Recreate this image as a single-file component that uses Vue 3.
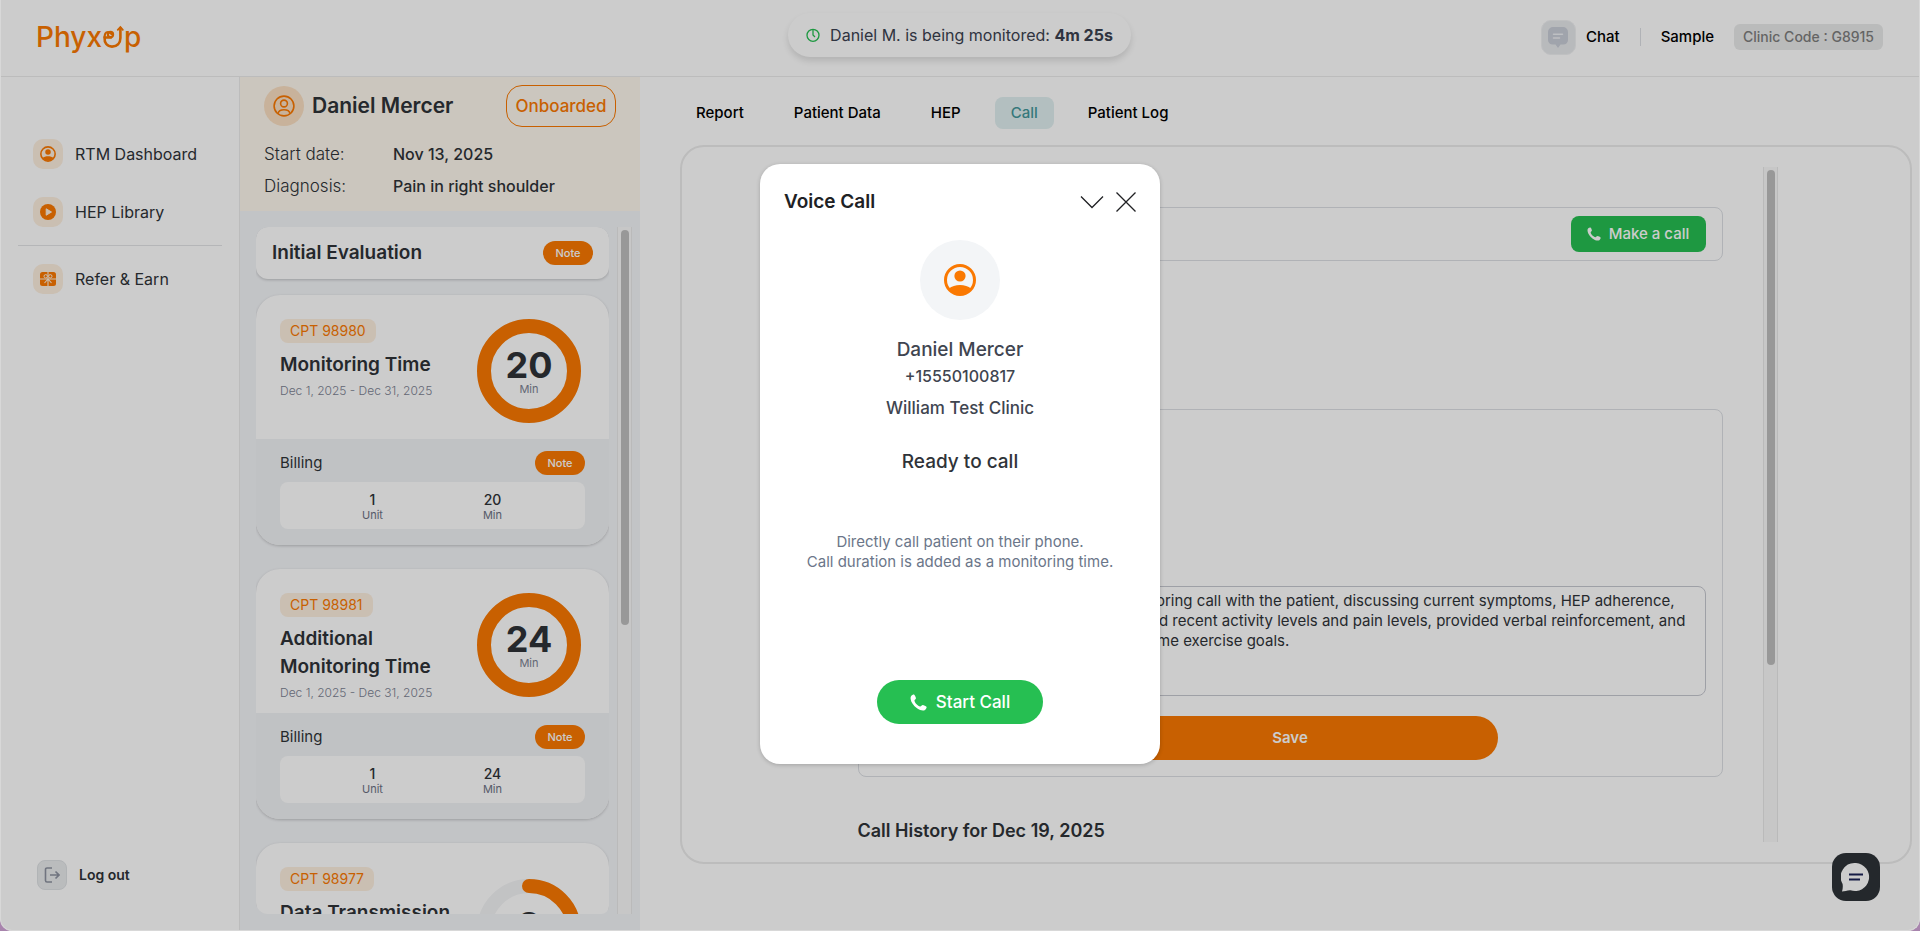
<template>
  <div class="app">
    <header class="topbar">
      <a href="#" class="logo" aria-label="PhyxUp">
        <span>Phyx</span>
        <svg class="logo-mark" viewBox="0 0 22 24" fill="none" stroke="currentColor" stroke-width="2.6" stroke-linecap="round">
          <path d="M9 12.5H2.6C2.2 17.8 5 21.6 10 21.6c5 0 8.4-3.400 8.400-8.600V3" />
          <path d="M2.600 12.500C2.600 9.500 3.500 7 6 7c1.500 0 2.500 1 3.500 2" stroke-width="2.200" />
          <circle cx="8.500" cy="9.500" r="2.600" stroke-width="2.200" />
          <path d="M15.800 4.800l2.600-2.800 2.400 2.800" stroke-width="1.800" />
        </svg>
        <span>p</span>
      </a>

      <div class="monitor">
        <svg width="14" height="14" viewBox="0 0 14 14" fill="none" stroke="#26bf52" stroke-width="1.3">
          <circle cx="7" cy="7.300" r="6" />
          <path d="M7 1.500v5.500l2 2" />
        </svg>
        <span>Daniel M. is being monitored: <b>4m 25s</b></span>
      </div>

      <div class="top-right">
        <a href="#" class="chat-link">
          <span class="chat-icon">
            <svg width="20" height="22" viewBox="0 0 20 22">
              <path d="M5 1h10a5 5 0 0 1 5 5v8a4.500 4.500 0 0 1-4.500 4.500h-3L10 22l-2.500-3.500h-3A4.500 4.500 0 0 1 0 14V6a5 5 0 0 1 5-5z" fill="#c9cdd7" />
              <path d="M5.500 8.300h9M5.500 12h6" stroke="#eef0f4" stroke-width="1.500" stroke-linecap="round" />
            </svg>
          </span>
          Chat
        </a>
        <span class="divider"></span>
        <a href="#" class="account">Sample</a>
        <span class="clinic-code">Clinic Code : G8915</span>
      </div>
    </header>

    <div class="body">
      <nav class="sidebar">
        <a href="#" class="nav-item">
          <span class="nav-icon">
            <svg width="16" height="16" viewBox="0 0 32 32"><circle cx="16" cy="16" r="14.300" fill="none" stroke="#fa7902" stroke-width="3.200" /><circle cx="16" cy="12" r="5.500" fill="#fa7902" /><path d="M5 24c5-4.500 17-4.500 22 0-4 7.500-18 7.500-22 0z" fill="#fa7902" /></svg>
          </span>
          RTM Dashboard
        </a>
        <a href="#" class="nav-item">
          <span class="nav-icon">
            <svg width="16" height="16" viewBox="0 0 16 16"><circle cx="8" cy="8" r="8" fill="#fa7902" /><path d="M6.200 4.800v6.400L11.500 8z" fill="#fdefdf" stroke="#fdefdf" stroke-linejoin="round" /></svg>
          </span>
          HEP Library
        </a>
        <hr />
        <a href="#" class="nav-item">
          <span class="nav-icon">
            <svg width="16" height="14" viewBox="0 0 16 14">
              <rect width="16" height="14" rx="2.500" fill="#fa7902" />
              <path d="M8 0v14M0 7h16M8 7L4.500 11M8 7l3.500 4" stroke="#fdefdf" stroke-width="1.100" />
              <circle cx="5.700" cy="4.300" r="1.700" fill="none" stroke="#fdefdf" />
              <circle cx="10.300" cy="4.300" r="1.700" fill="none" stroke="#fdefdf" />
            </svg>
          </span>
          Refer &amp; Earn
        </a>
        <button type="button" class="logout">
          <span class="logout-icon">
            <svg width="16" height="16" viewBox="0 0 16 16" fill="none" stroke="#8c929f" stroke-width="1.600"><path d="M8 1H3a1.500 1.500 0 0 0-1.500 1.500v11A1.500 1.500 0 0 0 3 15h5M6 8h9M11.500 4.500L15 8l-3.500 3.500" /></svg>
          </span>
          Log out
        </button>
      </nav>

      <aside class="patient">
        <div class="patient-head">
          <div class="patient-title">
            <span class="patient-avatar">
              <svg width="22" height="22" viewBox="0 0 22 22" fill="none" stroke="#fa7902" stroke-width="1.600"><circle cx="11" cy="11" r="9.900" /><circle cx="11" cy="8.500" r="3.400" /><path d="M5 18.500c1-5 11-5 12 0" /></svg>
            </span>
            <h1>Daniel Mercer</h1>
            <button type="button" class="status">Onboarded</button>
          </div>
          <dl>
            <dt>Start date:</dt>
            <dd>Nov 13, 2025</dd>
            <dt>Diagnosis:</dt>
            <dd>Pain in right shoulder</dd>
          </dl>
        </div>

        <div class="list-wrap">
          <div class="list">
            <section class="evaluation">
              <h2>Initial Evaluation</h2>
              <button type="button" class="note">Note</button>
            </section>

            <section v-for="card in cards" :key="card.code" class="card">
              <div class="card-top">
                <div class="card-text">
                  <span class="tag">CPT {{ card.code }}</span>
                  <h2><span v-for="line in card.title" :key="line">{{ line }}</span></h2>
                  <p>Dec 1, 2025 - Dec 31, 2025</p>
                  <p v-if="card.detail">{{ card.detail }}</p>
                </div>
                <div class="ring">
                  <svg width="104" height="104" viewBox="0 0 104 104" fill="none" stroke-width="14">
                    <circle cx="52" cy="52" r="45" stroke="#f3f4f6" />
                    <circle
                      cx="52" cy="52" r="45" stroke="#fa7902" pathLength="100" stroke-linecap="round"
                      :stroke-dasharray="`${card.progress} 100`" transform="rotate(-90 52 52)"
                    />
                  </svg>
                  <div class="ring-label">
                    <strong>{{ card.value }}</strong>
                    <span>{{ card.unit }}</span>
                  </div>
                </div>
              </div>
              <div class="billing">
                <div class="billing-head">
                  <span>Billing</span>
                  <button type="button" class="note">Note</button>
                </div>
                <div class="billing-box">
                  <div><b>1</b><span>Unit</span></div>
                  <div><b>{{ card.value }}</b><span>{{ card.unit }}</span></div>
                </div>
              </div>
            </section>
          </div>
          <div class="track"><div class="thumb list-thumb"></div></div>
        </div>
      </aside>

      <main class="main">
        <nav class="tabs">
          <a v-for="tab in tabs" :key="tab" href="#" :class="{ active: tab === activeTab }" @click.prevent="activeTab = tab">{{ tab }}</a>
        </nav>

        <div class="panel">
          <div class="panel-scroll">
            <div class="panel-content">
              <div class="call-row">
                <button type="button" class="make-call" @click="modalOpen = true">
                  <svg width="14" height="14" viewBox="0 0 16 16" fill="currentColor"><path :d="phonePath" /></svg>
                  Make a call
                </button>
              </div>

              <form class="note-form" @submit.prevent>
                <textarea v-model="note" aria-label="Call note"></textarea>
                <button type="submit" class="save">Save</button>
              </form>

              <h2 class="history">Call History for Dec 19, 2025</h2>
            </div>
            <div class="track"><div class="thumb panel-thumb"></div></div>
          </div>
        </div>
      </main>
    </div>

    <button type="button" class="support" aria-label="Open support chat">
      <svg width="30" height="30" viewBox="0 0 30 30">
        <path d="M15 1a14 14 0 1 1-5.500 27.200C6.500 28 3.500 29.500 1 29.500c.8-3 1-5 .6-7.500A14 14 0 0 1 15 1z" fill="#fff" />
        <path d="M8 12.500h14M8 17.500h11" stroke="#1b2257" stroke-width="2.200" />
      </svg>
    </button>

    <div v-if="modalOpen" class="backdrop">
      <div class="modal" role="dialog" aria-labelledby="call-title">
        <div class="modal-head">
          <h2 id="call-title">Voice Call</h2>
          <button type="button" aria-label="Minimize">
            <svg width="24" height="24" viewBox="0 0 24 24" fill="none" stroke="#202124" stroke-width="1.300"><path d="M1 6.500l11 11 11-11" /></svg>
          </button>
          <button type="button" aria-label="Close" @click="modalOpen = false">
            <svg width="20" height="20" viewBox="0 0 20 20" fill="none" stroke="#202124" stroke-width="1.300"><path d="M.5.5l19 19M19.500.5l-19 19" /></svg>
          </button>
        </div>
        <div class="modal-avatar">
          <svg width="32" height="32" viewBox="0 0 32 32"><circle cx="16" cy="16" r="14.500" fill="none" stroke="#fa7902" stroke-width="3" /><circle cx="16" cy="12" r="5.600" fill="#fa7902" /><path d="M5 24.500c5-4.800 17-4.800 22 0-4 7.500-18 7.500-22 0z" fill="#fa7902" /></svg>
        </div>
        <p class="callee">Daniel Mercer</p>
        <p class="phone">+15550100817</p>
        <p class="clinic">William Test Clinic</p>
        <p class="ready">Ready to call</p>
        <p class="hint">Directly call patient on their phone.<br />Call duration is added as a monitoring time.</p>
        <button type="button" class="start">
          <svg width="17" height="17" viewBox="0 0 16 16" fill="currentColor"><path :d="phonePath" /></svg>
          Start Call
        </button>
      </div>
    </div>
  </div>
</template>

<script setup>
import { ref } from "vue";

const tabs = ["Report", "Patient Data", "HEP", "Call", "Patient Log"];
const activeTab = ref("Call");
const modalOpen = ref(true);

const cards = [
  { code: "98980", title: ["Monitoring Time"], value: 20, unit: "Min", progress: 100 },
  { code: "98981", title: ["Additional", "Monitoring Time"], value: 24, unit: "Min", progress: 100 },
  { code: "98977", title: ["Data Transmission", "Musculoskeletal"], detail: "16 days required", value: 8, unit: "Days", progress: 50 },
];

const note = ref(
  "Conducted an interactive phone monitoring call with the patient, discussing current symptoms, HEP adherence, and general functional status. Reviewed recent activity levels and pain levels, provided verbal reinforcement, and encouraged the patient to meet the home exercise goals."
);

const phonePath =
  "M1.200 1.800C2 .8 3.300.2 4 .6c.7.5 1.600 2.500 1.600 3.400 0 1-1.500 1.500-1.400 2.300.3 2 3.300 5 5.300 5.400.9.200 1.500-1.400 2.500-1.400 1 0 3 1 3.500 1.800.5.9-.4 2.200-1.400 2.900-1.500 1-4.500.6-7.500-1.600C3.300 11 .9 7.500.6 4.600.5 3.500.6 2.500 1.200 1.800z";
</script>

<style>
html {
  background: #a884ad;
}
</style>

<style scoped>
.app {
  position: relative;
  display: flex;
  flex-direction: column;
  height: 100vh;
  box-sizing: border-box;
  border: 1px solid #d8d8d8;
  border-top: 0;
  border-radius: 0 0 12px 12px;
  overflow: hidden;
  background: #fff;
  color: #2f3338;
  font-family: Inter, "Open Sans", sans-serif;
  font-size: 14px;
  line-height: 20px;
}
.app *,
.app *::before {
  box-sizing: border-box;
}
h1,
h2,
p,
dl,
dd {
  margin: 0;
}
a {
  color: inherit;
  text-decoration: none;
}
button {
  padding: 0;
  border: 0;
  background: none;
  color: inherit;
  font: inherit;
  cursor: pointer;
}
h2 {
  font-size: 19px;
  font-weight: 600;
  line-height: 28px;
}

/* top bar */
.topbar {
  display: grid;
  grid-template-columns: 1fr auto 1fr;
  align-items: center;
  flex: none;
  height: 77px;
  padding: 0 36px 2px 35px;
  border-bottom: 1px solid #ebebeb;
}
.logo {
  display: flex;
  align-items: center;
  color: #fa7902;
  font-size: 28px;
  font-weight: 500;
  line-height: 32px;
}
.logo-mark {
  width: 22px;
  height: 24px;
}
.monitor {
  display: flex;
  align-items: center;
  align-self: start;
  gap: 10px;
  height: 44px;
  margin-top: 13px;
  padding: 0 18px;
  border-radius: 22px;
  box-shadow: 0 4px 6px rgba(0, 0, 0, 0.12);
  color: #3b4250;
  font-size: 16px;
}
.top-right {
  display: flex;
  align-items: center;
  justify-content: flex-end;
  color: #000;
  font-size: 15px;
  font-weight: 500;
}
.chat-link {
  display: flex;
  align-items: center;
  gap: 10px;
}
.chat-icon {
  display: grid;
  place-items: center;
  width: 35px;
  height: 35px;
  border: 1px solid #eff0f2;
  border-radius: 10px;
  background: #e7e9ec;
}
.divider {
  width: 1px;
  height: 18px;
  margin: 0 20px;
  background: #dcdfe4;
}
.clinic-code {
  margin-left: 20px;
  padding: 3px 9px;
  border-radius: 6px;
  background: #e9eaea;
  color: #7e7e7e;
  font-size: 14px;
}

.body {
  display: flex;
  flex: 1;
  min-height: 0;
}

/* sidebar */
.sidebar {
  display: flex;
  flex-direction: column;
  flex: none;
  width: 239px;
  padding: 62px 17px 40px;
  border-right: 1px solid #ebebeb;
}
.nav-item {
  display: flex;
  align-items: center;
  gap: 12px;
  height: 30px;
  margin-bottom: 28px;
  padding-left: 15px;
  font-size: 16px;
}
.nav-icon {
  display: grid;
  place-items: center;
  width: 30px;
  height: 30px;
  border-radius: 10px;
  background: #fdefdf;
}
.sidebar hr {
  width: 100%;
  height: 1px;
  margin: -10px 0 18px;
  border: 0;
  background: #e3e4e6;
}
.logout {
  display: flex;
  align-items: center;
  gap: 12px;
  margin-top: auto;
  padding-left: 19px;
  font-weight: 600;
}
.logout-icon {
  display: grid;
  place-items: center;
  width: 30px;
  height: 30px;
  border: 1px solid #dee1e4;
  border-radius: 8px;
  background: #e9ebed;
}

/* patient column */
.patient {
  display: flex;
  flex-direction: column;
  flex: none;
  width: 400px;
  background: #f3f5f8;
}
.patient-head {
  height: 134px;
  padding: 8px 24px 0;
  background: #fef8ee;
  font-size: 16px;
}
.patient-title {
  display: flex;
  align-items: center;
  gap: 8px;
}
.patient-title h1 {
  flex: 1;
  font-size: 21px;
  font-weight: 600;
  line-height: 30px;
}
.patient-avatar {
  display: grid;
  place-items: center;
  width: 40px;
  height: 40px;
  border-radius: 50%;
  background: #fbdfc2;
}
.status {
  width: 110px;
  height: 42px;
  border: 1px solid #fa7902;
  border-radius: 16px;
  color: #fa7902;
  font-size: 17px;
  font-weight: 500;
}
.patient-head dl {
  display: grid;
  grid-template-columns: 129px 1fr;
  row-gap: 8px;
  margin-top: 15px;
  line-height: 24px;
}
.patient-head dt {
  font-size: 17px;
  font-weight: 300;
}
.patient-head dd {
  font-weight: 500;
}
.list-wrap {
  display: flex;
  gap: 8px;
  flex: 1;
  min-height: 0;
  margin: 16px 8px 16px 16px;
}
.list {
  flex: 1;
  overflow: hidden;
  border-radius: 12px 12px 8px 12px;
}
.evaluation {
  display: flex;
  align-items: center;
  justify-content: space-between;
  height: 52px;
  margin-bottom: 16px;
  padding: 0 16px;
  border-radius: 12px;
  background: #fff;
  box-shadow: 0 1px 3px rgba(0, 0, 0, 0.2);
}
.note {
  width: 50px;
  height: 24px;
  border-radius: 12px;
  background: #fa7902;
  color: #fff;
  font-size: 11px;
  font-weight: 500;
}
.card {
  margin-bottom: 24px;
  border-radius: 24px;
  background: #fff;
  box-shadow: 0 1px 3px rgba(0, 0, 0, 0.2);
  overflow: hidden;
}
.card-top {
  display: flex;
  align-items: center;
  justify-content: space-between;
  min-height: 144px;
  padding: 24px 28px 12px 24px;
}
.card-text {
  align-self: flex-start;
}
.tag {
  display: block;
  width: fit-content;
  padding: 2px 10px;
  border-radius: 8px;
  background: #fdefdf;
  color: #fa7902;
}
.card h2 {
  margin-top: 8px;
}
.card h2 span {
  display: block;
}
.card p {
  margin-top: 4px;
  color: #7c8293;
  font-size: 12px;
  font-weight: 300;
  line-height: 16px;
}
.card p + p {
  margin-top: 8px;
}
.ring {
  position: relative;
  flex: none;
  width: 104px;
  height: 104px;
  margin-bottom: 4px;
}
.ring-label {
  position: absolute;
  inset: 0;
  display: flex;
  flex-direction: column;
  align-items: center;
  justify-content: center;
}
.ring-label strong {
  font-size: 36px;
  line-height: 36px;
}
.ring-label span {
  color: #7c8293;
  font-size: 11px;
  line-height: 12px;
}
.billing {
  padding: 12px 24px 16px;
  background: #f1f3f5;
}
.billing-head {
  display: flex;
  align-items: center;
  justify-content: space-between;
  font-size: 15px;
}
.billing-box {
  display: flex;
  justify-content: center;
  gap: 90px;
  margin-top: 7px;
  padding: 10px 0 7px;
  border-radius: 8px;
  background: #fff;
  text-align: center;
}
.billing-box b,
.billing-box span {
  display: block;
  min-width: 30px;
  font-weight: 500;
  line-height: 16px;
}
.billing-box span {
  color: #6b7183;
  font-size: 11px;
  font-weight: 400;
  line-height: 14px;
}

/* scrollbars */
.track {
  flex: none;
  width: 15px;
  padding: 3px;
  border: solid #e9e9e9;
  border-width: 0 1px;
  background: #f9f9f9;
}
.thumb {
  width: 8px;
  margin: 0 auto;
  border-radius: 4px;
  background: #bfbfbf;
}
.list-thumb {
  height: 58%;
}
.panel-thumb {
  height: 74%;
}

/* main column */
.main {
  display: flex;
  flex-direction: column;
  flex: 1;
  min-width: 0;
  padding: 20px 7px 66px 40px;
}
.tabs {
  display: flex;
  gap: 18px;
  color: #000;
  font-size: 15px;
  font-weight: 500;
}
.tabs a {
  padding: 6px 16px;
  border-radius: 8px;
}
.tabs .active {
  background: #e0eff0;
  color: #44979a;
}
.panel {
  flex: 1;
  min-height: 0;
  margin-top: 16px;
  padding: 20px 20px 20px 23px;
  border: 2px solid #ebebeb;
  border-radius: 24px;
}
.panel-scroll {
  display: flex;
  max-width: 960px;
  height: 100%;
  margin: 0 auto;
}
.panel-content {
  flex: 1;
  padding: 40px 40px 0;
  overflow: hidden;
}
.call-row {
  display: flex;
  justify-content: flex-end;
  padding: 8px 16px;
  border: 1px solid #dcdfe4;
  border-radius: 8px;
}
.make-call {
  display: flex;
  align-items: center;
  justify-content: center;
  gap: 8px;
  width: 135px;
  height: 36px;
  border-radius: 8px;
  background: #26bf52;
  color: #fff;
  font-size: 15px;
  font-weight: 500;
}
.note-form {
  display: flex;
  flex-direction: column;
  align-items: center;
  margin-top: 148px;
  padding: 176px 16px 16px;
  border: 1px solid #dcdfe4;
  border-radius: 8px;
}
textarea {
  display: block;
  width: 100%;
  height: 110px;
  padding: 4px 4px 4px 10px;
  border: 1px solid #c6c8d0;
  border-radius: 8px;
  background: #fff;
  color: #2f3338;
  font: inherit;
  font-size: 15px;
  resize: none;
}
.save {
  width: 50%;
  height: 44px;
  margin-top: 20px;
  border-radius: 22px;
  background: #fa7902;
  color: #fff;
  font-size: 15px;
  font-weight: 600;
}
.history {
  margin-top: 40px;
  font-size: 18px;
}

.support {
  position: absolute;
  right: 39px;
  bottom: 29px;
  display: grid;
  place-items: center;
  width: 48px;
  height: 48px;
  border-radius: 14px;
  background: #2e3338;
}

/* voice call dialog */
.backdrop {
  position: absolute;
  inset: 0;
  display: grid;
  place-items: center;
  padding-bottom: 2px;
  background: rgba(0, 0, 0, 0.2);
}
.modal {
  display: flex;
  flex-direction: column;
  align-items: center;
  width: 400px;
  height: 600px;
  padding: 24px 24px 40px;
  border-radius: 20px;
  background: #fff;
  box-shadow: 0 1px 4px rgba(0, 0, 0, 0.2);
  color: #404550;
  font-size: 16px;
  font-weight: 500;
  line-height: 24px;
}
.modal-head {
  display: flex;
  align-items: center;
  gap: 12px;
  width: 100%;
  color: #202124;
}
.modal-head h2 {
  flex: 1;
}
.modal-head button {
  display: grid;
}
.modal-avatar {
  display: grid;
  place-items: center;
  width: 80px;
  height: 80px;
  margin: 24px 0 16px;
  border-radius: 50%;
  background: #f3f5f7;
}
.callee,
.ready {
  font-size: 19px;
  line-height: 28px;
}
.clinic {
  margin: 8px 0 28px;
  font-size: 17px;
}
.ready {
  color: #2f3338;
}
.hint {
  margin-top: 56px;
  color: #6b7689;
  font-size: 15px;
  font-weight: 400;
  line-height: 20px;
  text-align: center;
}
.start {
  display: flex;
  align-items: center;
  justify-content: center;
  gap: 9px;
  width: 166px;
  height: 44px;
  margin-top: auto;
  border-radius: 22px;
  background: #26bf52;
  color: #fff;
  font-size: 17px;
}
</style>
